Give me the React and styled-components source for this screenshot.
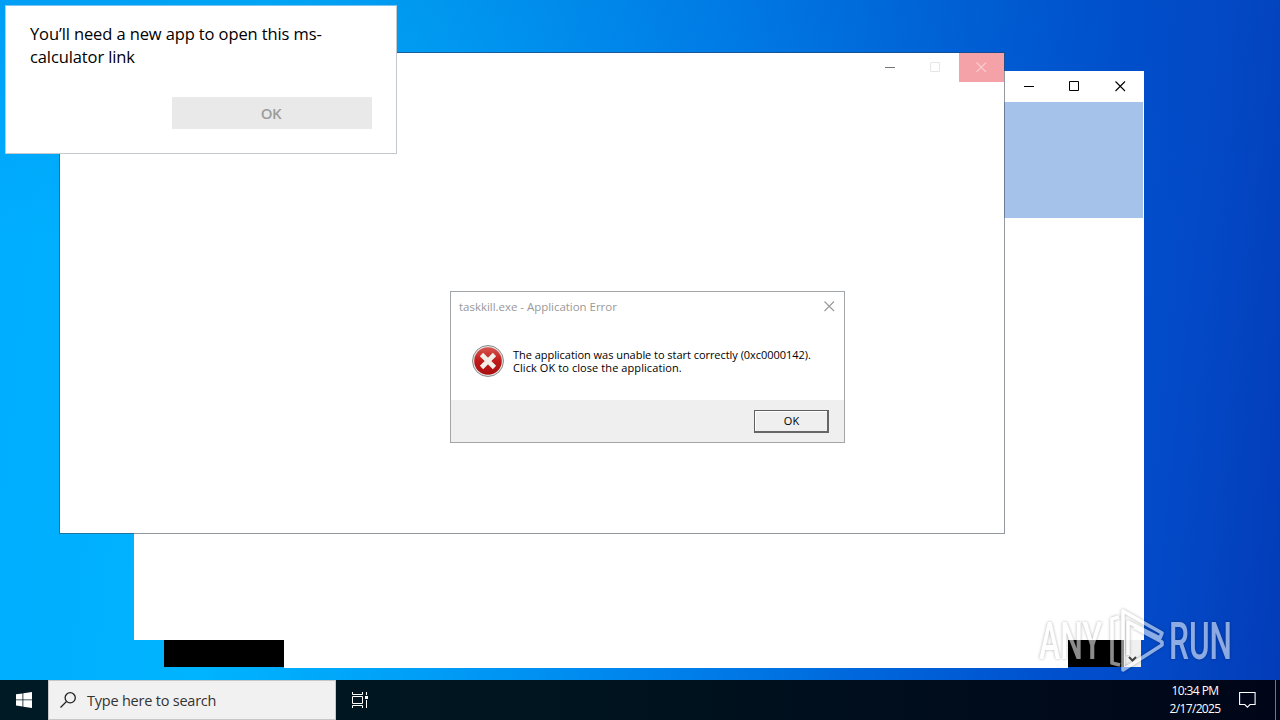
import styled, { createGlobalStyle } from "styled-components";

const GlobalStyle = createGlobalStyle`
  * {
    box-sizing: border-box;
  }

  body {
    margin: 0;
    overflow: hidden;
    font-family: "Open Sans", "Noto Sans", sans-serif;
  }
`;

const Screen = styled.div`
  display: grid;
  grid-template-rows: 1fr 40px;
  width: 1280px;
  height: 720px;
`;

const Desktop = styled.main`
  position: relative;
  background:
    linear-gradient(180deg, rgba(0, 70, 180, 0.14), transparent 35%),
    linear-gradient(
      96deg,
      #00adff 0%,
      #00b4ff 20%,
      #00a2f8 34%,
      #0082ec 54%,
      #0062d8 72%,
      #004fcd 84%,
      #034ac8 90%,
      #033cb8 100%
    );
`;

/* windows are placed freely on the desktop */
const Window = styled.section`
  position: absolute;
  left: ${({ $x }) => $x}px;
  top: ${({ $y }) => $y}px;
  width: ${({ $w }) => $w}px;
  height: ${({ $h }) => $h}px;
`;

const BackWindow = styled(Window)`
  display: flex;
  flex-direction: column;
`;

const TitleBar = styled.header`
  display: flex;
  justify-content: flex-end;
  height: ${({ $h }) => $h}px;
  background: #fff;
`;

const Caption = styled.span`
  display: grid;
  place-items: center;
  width: ${({ $w = 45 }) => $w}px;
  height: 100%;
  padding-right: ${({ $pad = 0 }) => $pad}px;
  color: ${({ $color }) => $color};
  background: ${({ $bg = "transparent" }) => $bg};

  svg {
    display: block;
  }
`;

const Banner = styled.div`
  height: 116px;
  border-right: 1px solid #fff;
  background: #a4c2ea;
`;

const Page = styled.div`
  flex: 1;
  background: #fff;
`;

const Strip = styled.div`
  display: grid;
  grid-template-columns: 30px 120px 1fr 56px 17px 3px;
  height: 28px;
`;

const Black = styled.div`
  height: 27px;
  background: #000;
`;

const ScrollDown = styled.div`
  display: grid;
  place-items: center;
  height: 27px;
  padding-top: 11px;
  background: #f0f0f0;
`;

const FrontWindow = styled(Window)`
  border: 1px solid rgba(60, 70, 85, 0.55);
  border-top-color: rgba(30, 70, 120, 0.7);
  background: #fff;
  background-clip: padding-box;
`;

const Prompt = styled(Window)`
  display: flex;
  flex-direction: column;
  align-items: flex-end;
  justify-content: space-between;
  padding: 16px 24px 24px;
  border: 1px solid #c3c8cc;
  border-top-color: #7cc4f2;
  border-left-color: #9bd5f8;
  background: #fff;
`;

const PromptText = styled.p`
  width: 100%;
  margin: 0;
  color: #000;
  font-size: 16.5px;
  line-height: 23px;
  letter-spacing: -0.11px;
  white-space: nowrap;
`;

const PromptButton = styled.button`
  width: 200px;
  height: 32px;
  padding: 0 2px 1px 0;
  border: 0;
  background: #e9e9e9;
  color: #9c9c9c;
  font: 600 15px/30px "Open Sans", sans-serif;
  letter-spacing: -0.4px;
`;

const ErrorDialog = styled(Window)`
  display: flex;
  flex-direction: column;
  border: 1px solid #a3a6a9;
  background: #fff;
`;

const ErrorTitle = styled.header`
  display: flex;
  align-items: center;
  justify-content: space-between;
  height: 28px;
  padding: 0 9px 0 8px;
  color: #999;
  font-size: 11.5px;
`;

const ErrorBody = styled.div`
  display: flex;
  flex: 1;
  gap: 8px;
  padding: 24px 0 0 20px;
`;

const ErrorText = styled.p`
  margin: 4px 0 0;
  color: #000;
  font-size: 11px;
  line-height: 13px;
  white-space: nowrap;
`;

const Line = styled.span`
  display: block;
  letter-spacing: ${({ $spacing = 0 }) => $spacing}px;
`;

const ErrorFooter = styled.footer`
  display: flex;
  justify-content: flex-end;
  height: 42px;
  padding: 10px 15px 0 0;
  background: #efefef;
`;

const ErrorButton = styled.button`
  width: 75px;
  height: 23px;
  padding: 0 0 0 1px;
  border: 1px solid #5f5f5f;
  border-right: 2px solid #666;
  border-bottom: 2px solid #666;
  background: #efefef;
  box-shadow: inset 1px 1px #fff;
  color: #000;
  font: 11px/18px "Open Sans", sans-serif;
`;

const Watermark = styled.svg`
  position: absolute;
  left: 1030px;
  top: 600px;
  overflow: visible;
  opacity: 0.55;
  filter: drop-shadow(0 0 1.5px rgba(0, 0, 0, 0.55));
`;

const Taskbar = styled.footer`
  display: flex;
  background: linear-gradient(90deg, #001a25 0%, #00141f 45%, #000b1c 80%, #000617 100%);
  color: #fff;
`;

const TaskButton = styled.span`
  display: grid;
  place-items: center;
  width: 48px;
`;

const Search = styled.label`
  display: flex;
  align-items: center;
  gap: 11px;
  width: 288px;
  padding-left: 11px;
  border: 1px solid #c5c7c8;
  background: #f1f1f1;
  color: #333;
  font-size: 14.5px;
  letter-spacing: -0.22px;
`;

const Tray = styled.div`
  display: flex;
  margin-left: auto;
`;

const Clock = styled.time`
  width: 70px;
  padding-top: 2px;
  font-size: 12px;
  line-height: 18px;
  text-align: center;
`;

const Notifications = styled.span`
  display: grid;
  place-items: center;
  width: 34px;
  padding: 0 0 1px 1px;
`;

const ShowDesktop = styled.span`
  width: 5px;
  margin-left: 11px;
  border-left: 1px solid #6f7780;
`;

const Minimize = () => (
  <svg width="11" height="11" stroke="currentColor">
    <path d="M0 5.5h10" />
  </svg>
);

const Maximize = () => (
  <svg width="11" height="11" fill="none" stroke="currentColor">
    <path d="M.5.5h9v9h-9z" />
  </svg>
);

const Close = () => (
  <svg width="11" height="11" stroke="currentColor" strokeWidth="1.1">
    <path d="M.5.5l9.5 9.5M10 .5L.5 10" />
  </svg>
);

const ErrorIcon = () => (
  <svg width="34" height="34" viewBox="0 0 34 34">
    <defs>
      <linearGradient id="red" x1="0" y1="0" x2="0" y2="1">
        <stop offset="0" stopColor="#d9564f" />
        <stop offset="0.5" stopColor="#c01a1a" />
        <stop offset="1" stopColor="#a80f10" />
      </linearGradient>
    </defs>
    <circle cx="17" cy="17" r="15.5" fill="#e4e4e4" stroke="#8d8d8d" />
    <circle cx="17" cy="17" r="13.8" fill="url(#red)" />
    <path d="M10.5 10.5l13 13M23.5 10.5l-13 13" stroke="#f1efe8" strokeWidth="4.6" />
  </svg>
);

function Captions({ color, faded, closeBg }) {
  const pad = faded ? 2 : 0;

  return (
    <>
      <Caption $color={color} $pad={pad}>
        <Minimize />
      </Caption>
      <Caption $color={faded || color} $pad={pad}>
        <Maximize />
      </Caption>
      <Caption $color={faded ? "#f9cdd0" : color} $bg={closeBg} $w={faded ? 45 : 47}>
        <Close />
      </Caption>
    </>
  );
}

export default function App() {
  return (
    <Screen>
      <GlobalStyle />
      <Desktop>
        <BackWindow $x={134} $y={71} $w={1010} $h={597}>
          <TitleBar $h={31}>
            <Captions color="#000" />
          </TitleBar>
          <Banner />
          <Page />
          <Strip>
            <span />
            <Black />
            <Page />
            <Black />
            <ScrollDown>
              <svg width="9" height="7" fill="none" stroke="#444" strokeWidth="2">
                <path d="M1 1l3.5 3.5L8 1" />
              </svg>
            </ScrollDown>
          </Strip>
        </BackWindow>

        <FrontWindow $x={59} $y={52} $w={946} $h={482}>
          <TitleBar $h={29}>
            <Captions color="#777" faded="#e6e6e6" closeBg="#f5a1a8" />
          </TitleBar>
        </FrontWindow>

        <ErrorDialog $x={450} $y={291} $w={395} $h={152}>
          <ErrorTitle>
            <Line $spacing={-0.03}>taskkill.exe - Application Error</Line>
            <Close />
          </ErrorTitle>
          <ErrorBody>
            <ErrorIcon />
            <ErrorText>
              <Line $spacing={-0.04}>The application was unable to start correctly (0xc0000142).</Line>
              <Line $spacing={0.08}>Click OK to close the application.</Line>
            </ErrorText>
          </ErrorBody>
          <ErrorFooter>
            <ErrorButton>OK</ErrorButton>
          </ErrorFooter>
        </ErrorDialog>

        <Prompt $x={5} $y={5} $w={392} $h={149}>
          <PromptText>
            You’ll need a new app to open this ms-
            <br />
            calculator link
          </PromptText>
          <PromptButton>OK</PromptButton>
        </Prompt>

        <Watermark width="240" height="80" fontFamily="Roboto" fontSize="52" fontWeight="500" fill="#fff">
          <text x="9" y="59" textLength="63" lengthAdjust="spacingAndGlyphs">
            ANY
          </text>
          <text x="139" y="59" textLength="63" lengthAdjust="spacingAndGlyphs">
            RUN
          </text>
          <g fill="none" stroke="#fff" strokeWidth="3.6" strokeLinejoin="round">
            <path d="M89 17l-7 2v44l8 2" />
            <path d="M98 55V22l32 16 2-5-39-22v59l39-25v-3l-28-15" />
          </g>
        </Watermark>
      </Desktop>

      <Taskbar>
        <TaskButton>
          <svg width="16" height="16" fill="#fff">
            <path d="M0 2.3l6.5-.9v6.1H0zM7.3 1.2L16 0v7.5H7.3zM0 8.3h6.5v6.2L0 13.6zM7.3 8.3H16V16l-8.7-1.3z" />
          </svg>
        </TaskButton>
        <Search>
          <svg width="16" height="16" fill="none" stroke="#222" strokeWidth="1.3">
            <circle cx="10.2" cy="5.8" r="5.1" />
            <path d="M6.5 9.5L.5 15.5" />
          </svg>
          Type here to search
        </Search>
        <TaskButton>
          <svg width="17" height="16" fill="none" stroke="#fff">
            <path d="M.5 0v2.5h10V0M.5 16v-2.5h10V16M.5 4.5h10v7H.5zM14.5 0v3M14.5 8v8" />
            <path d="M13 4h3v3h-3z" fill="#fff" stroke="none" />
          </svg>
        </TaskButton>
        <Tray>
          <Clock>
            <Line $spacing={-0.6}>10:34 PM</Line>
            <Line $spacing={-0.65}>2/17/2025</Line>
          </Clock>
          <Notifications>
            <svg width="17" height="17" fill="none" stroke="#fff" strokeWidth="1.1">
              <path d="M.6 1.5h15.5v12H11l-2.6 2.6-2.6-2.6H.6z" />
            </svg>
          </Notifications>
          <ShowDesktop />
        </Tray>
      </Taskbar>
    </Screen>
  );
}
